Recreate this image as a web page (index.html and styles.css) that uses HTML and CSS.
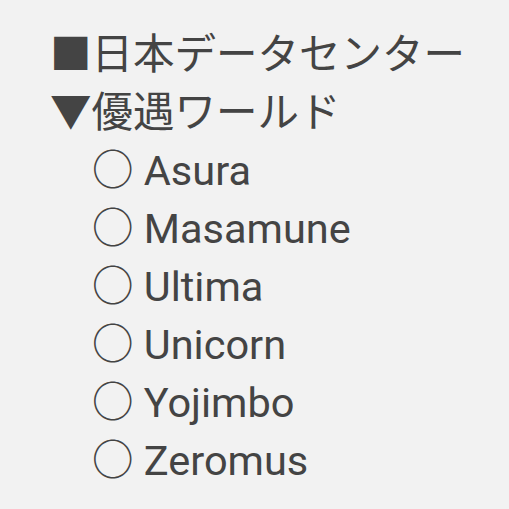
FILE: index.html
```html
<!DOCTYPE html>
<html lang="ja">
<head>
<meta charset="utf-8">
<link rel="stylesheet" href="styles.css">
</head>
<body>
<div class="tree">
  <div class="row">■日本データセンター</div>
  <div class="row">▼優遇ワールド</div>
  <div class="world">
    <div class="row">○ Asura</div>
    <div class="row">○ Masamune</div>
    <div class="row">○ Ultima</div>
    <div class="row">○ Unicorn</div>
    <div class="row">○ Yojimbo</div>
    <div class="row">○ Zeromus</div>
  </div>
</div>
</body>
</html>
```
FILE: styles.css
```css
html, body {
  margin: 0;
  background: #f2f2f2;
}
body {
  padding: 26px 0 0 50px;
  font-family: Roboto, "Noto Sans CJK JP", sans-serif;
  font-size: 41.5px;
  line-height: 58px;
  color: #444444;
}
.world {
  padding-left: 42px;
}
.row {
  white-space: nowrap;
}
```
